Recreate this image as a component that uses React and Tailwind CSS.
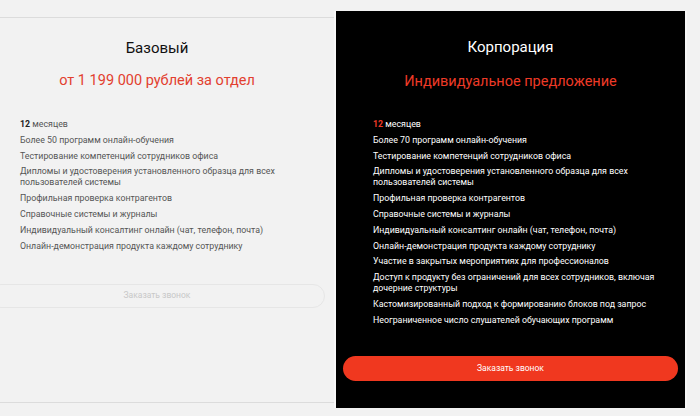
import React from 'react';

const basicFeatures = [
  'Более 50 программ онлайн-обучения',
  'Тестирование компетенций сотрудников офиса',
  'Дипломы и удостоверения установленного образца для всех пользователей системы',
  'Профильная проверка контрагентов',
  'Справочные системы и журналы',
  'Индивидуальный консалтинг онлайн (чат, телефон, почта)',
  'Онлайн-демонстрация продукта каждому сотруднику',
];

const corpFeatures = [
  'Более 70 программ онлайн-обучения',
  'Тестирование компетенций сотрудников офиса',
  'Дипломы и удостоверения установленного образца для всех пользователей системы',
  'Профильная проверка контрагентов',
  'Справочные системы и журналы',
  'Индивидуальный консалтинг онлайн (чат, телефон, почта)',
  'Онлайн-демонстрация продукта каждому сотруднику',
  'Участие в закрытых мероприятиях для профессионалов',
  'Доступ к продукту без ограничений для всех сотрудников, включая дочерние структуры',
  'Кастомизированный подход к формированию блоков под запрос',
  'Неограниченное число слушателей обучающих программ',
];

const App = () => {
  return (
    <div
      className="w-[700px] h-[416px] bg-[#f2f2f2] overflow-hidden flex items-start pt-[11px]"
      style={{ fontFamily: 'Roboto, "Noto Sans", sans-serif' }}
    >
      {/* Basic plan */}
      <div className="ml-[-20px] w-[354px] h-[386px] mt-[6px] shrink-0 border-y border-[#dcdcdc] bg-[#f2f2f2] flex flex-col pt-[21px]">
        <h3 className="text-center text-[15px] leading-[18px] text-[#111]">Базовый</h3>
        <div className="text-center text-[14.5px] leading-[20px] text-[#e2402f] mt-[14px]">
          от 1 199 000 рублей за отдел
        </div>
        <ul className="mt-[28px] ml-[40px] w-[295px] space-y-[4.8px] text-[8.8px] leading-[11px] text-[#555]">
          <li>
            <span className="font-bold text-[#222]">12</span> месяцев
          </li>
          {basicFeatures.map((f) => (
            <li key={f}>{f}</li>
          ))}
        </ul>
        <button className="mx-[9px] mt-[32px] h-[24px] rounded-full border border-[#e6e6e6] text-[8.5px] text-[#c8c8c8]">
          Заказать звонок
        </button>
      </div>

      {/* Corporate plan */}
      <div className="w-[353px] h-[397px] shrink-0 bg-black border-x-2 border-[#f8f8f8] flex flex-col pt-[27px]">
        <h3 className="text-center text-[15px] leading-[18px] text-white">Корпорация</h3>
        <div className="text-center text-[14.5px] leading-[20px] text-[#ee3a27] mt-[16px]">
          Индивидуальное предложение
        </div>
        <ul className="mt-[27px] ml-[37px] w-[300px] space-y-[4.8px] text-[8.8px] leading-[11px] text-white">
          <li>
            <span className="font-bold text-[#ee3a27]">12</span> месяцев
          </li>
          {corpFeatures.map((f) => (
            <li key={f}>{f}</li>
          ))}
        </ul>
        <button className="mx-[7px] mt-[30px] h-[25px] rounded-full bg-[#f0381f] text-[8.5px] text-white">
          Заказать звонок
        </button>
      </div>
    </div>
  );
};

export default App;
